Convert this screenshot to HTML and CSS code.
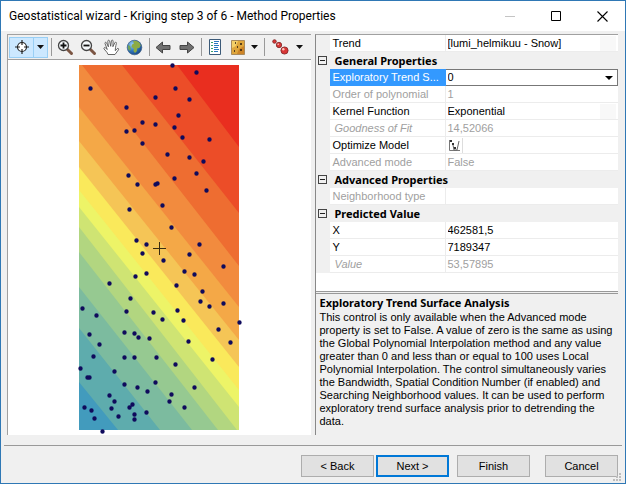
FILE: index.html
```
<!DOCTYPE html>
<html lang="en">
<head>
    <meta charset="UTF-8">
    <meta name="viewport" content="width=device-width, initial-scale=1.0">
    <title>Geostatistical wizard</title>
    <link rel="stylesheet" href="styles.css">
</head>
<body>
    <div class="window">
        <header class="titlebar">
            <h1>Geostatistical wizard - Kriging step 3 of 6 - Method Properties</h1>
            <div class="window-buttons">
                <button aria-label="Minimize" disabled><svg width="11" height="11"><path d="M0 5.5h10" stroke="#c4c4c4"/></svg></button>
                <button aria-label="Maximize"><svg width="11" height="11"><path d="M.5.5h9v9h-9z" fill="none" stroke="#000"/></svg></button>
                <button aria-label="Close"><svg width="11" height="11"><path d="M.5.5l10 10M10.5.5l-10 10" stroke="#000" stroke-width="1.1"/></svg></button>
            </div>
        </header>

        <main class="content">
            <section class="preview">
                <div class="toolbar">
                    <div class="split active">
                        <button aria-label="Identify">
                            <svg width="16" height="16"><circle cx="8" cy="8" r="4.5" fill="#fff" stroke="#222" stroke-width="1.2"/><path d="M8 1v5M8 10v5M1 8h5M10 8h5" stroke="#222" stroke-width="1.2"/></svg>
                        </button>
                        <button class="drop" aria-label="Identify options"><svg width="7" height="4"><path d="M0 0h7L3.500 4z" fill="#111"/></svg></button>
                    </div>
                    <span class="sep"></span>
                    <button class="tool" aria-label="Zoom in">
                        <svg width="17" height="17"><path d="M10.500 10.500l4 4" stroke="#7b5543" stroke-width="3" stroke-linecap="round"/><circle cx="6.500" cy="6.500" r="5" fill="#f6f9fb" stroke="#444" stroke-width="1.300"/><path d="M3.500 6.500h6M6.500 3.500v6" stroke="#111" stroke-width="1.800"/></svg>
                    </button>
                    <button class="tool" aria-label="Zoom out">
                        <svg width="17" height="17"><path d="M10.500 10.500l4 4" stroke="#7b5543" stroke-width="3" stroke-linecap="round"/><circle cx="6.500" cy="6.500" r="5" fill="#f6f9fb" stroke="#444" stroke-width="1.300"/><path d="M3.500 6.500h6" stroke="#111" stroke-width="1.800"/></svg>
                    </button>
                    <button class="tool" aria-label="Pan">
                        <svg width="17" height="17"><path d="M5 15.500C4 12.500 2 11.500 1 9.800c-.5-1.200.8-1.600 1.600-.8l1.700 1.500L2 4.500c-.4-1.300 1.100-1.700 1.600-.5l1.800 3.800L4.800 2.300c-.1-1.300 1.500-1.500 1.800-.2l1.100 5.200L8.400 2c.2-1.300 1.700-1.100 1.700.1l-.2 5.600 1.900-3.900c.6-1.200 1.900-.6 1.600.6-.8 3-1.100 5-1.100 7.300L14 9.800c1-1 2.200 0 1.400 1.100L12 15.500z" fill="#fff" stroke="#555" stroke-width=".9"/></svg>
                    </button>
                    <button class="tool" aria-label="Full extent">
                        <svg width="17" height="17">
                            <defs><radialGradient id="sea" cx=".35" cy=".3" r=".8"><stop offset="0" stop-color="#9fd0f5"/><stop offset=".5" stop-color="#3479c0"/><stop offset="1" stop-color="#123f7c"/></radialGradient></defs>
                            <circle cx="8.500" cy="8.500" r="7.300" fill="url(#sea)"/>
                            <path d="M7 2l3-.6 3.500 2 1.300 3-1.500 2.500-2 .3-.5 3L9 14l-1.500-2 .3-2.500L5.500 8 6 5.500 8 4.500z" fill="#8cab45"/>
                            <path d="M2 6l2 1 1 3-1 2-2-2z" fill="#6fa35a"/>
                            <circle cx="8.500" cy="8.500" r="7.300" fill="none" stroke="#3a5a80" stroke-width=".7"/>
                        </svg>
                    </button>
                    <span class="sep"></span>
                    <button class="tool" aria-label="Previous extent">
                        <svg width="17" height="15"><path d="M1 7.500L7.500 2v3.500H15v4H7.500V13z" fill="#707070" stroke="#444"/></svg>
                    </button>
                    <button class="tool" aria-label="Next extent">
                        <svg width="17" height="15"><path d="M16 7.500L9.500 2v3.500H2v4h7.500V13z" fill="#707070" stroke="#444"/></svg>
                    </button>
                    <span class="sep"></span>
                    <button class="tool" aria-label="Show legend">
                        <svg width="13" height="16"><path d="M.5.5h11v15H.5z" fill="#fff" stroke="#3c5a78"/><path d="M2 3.500h2M2 6.500h2M2 9.500h2M2 12.500h2" stroke="#3aa06a"/><path d="M5 2.500h5M5 4.500h4M5 6.500h5M5 8.500h4M5 10.500h5M5 12.500h4" stroke="#2a7ac0"/></svg>
                    </button>
                    <div class="split">
                        <button aria-label="Show layers">
                            <svg width="15" height="15"><path d="M.5.5h13v14H.5z" fill="#dfa63c" stroke="#a98a5c"/><path d="M1 1h6L5 6 1 8z" fill="#f4cf68"/><path d="M8 9l5-3v8H6z" fill="#cd8427"/><path d="M4 3h1M9 4h2M6 7h1M3 11h1M9 10h2" stroke="#2a1c10" stroke-width="1.500"/></svg>
                        </button>
                        <button class="drop" aria-label="Layer options"><svg width="7" height="4"><path d="M0 0h7L3.500 4z" fill="#111"/></svg></button>
                    </div>
                    <span class="sep"></span>
                    <div class="split points">
                        <button aria-label="Show points">
                            <svg width="17" height="16"><g fill="#d93636" stroke="#7c2525" stroke-width=".8"><circle cx="2.500" cy="2.500" r="1.800"/><circle cx="7" cy="6" r="2.700"/><circle cx="12.500" cy="11.500" r="3.600"/></g><g fill="#ffc4bc"><circle cx="6.200" cy="5.300" r=".8"/><circle cx="11.300" cy="10.300" r="1.200"/></g></svg>
                        </button>
                        <button class="drop" aria-label="Point options"><svg width="7" height="4"><path d="M0 0h7L3.500 4z" fill="#111"/></svg></button>
                    </div>
                </div>
                <div class="map">
                    <svg width="160" height="365" viewBox="0 0 160 365" role="img" aria-label="Predicted surface with sample points">
                        <path d="M0 0h160v365H0z" fill="#e92e1f"/>
                        <path d="M0 0h78l82 107v258H0z" fill="#e92e1f"/>
                        <path d="M0 0h98l62 82v283H0z" fill="#ec4d28"/>
                        <path d="M0 0h43l117 148v217H0z" fill="#ee6d31"/>
                        <path d="M0 0h3l157 201v164H0z" fill="#f28b3e"/>
                        <path d="M0 42l160 200v123H0z" fill="#f4a847"/>
                        <path d="M0 76l160 199v90H0z" fill="#f5c556"/>
                        <path d="M0 102l160 200v63H0z" fill="#fae95b"/>
                        <path d="M0 125l160 200v40H0z" fill="#edf467"/>
                        <path d="M0 142l160 200v23H0z" fill="#cfe473"/>
                        <path d="M0 162l158 203H0z" fill="#b2d680"/>
                        <path d="M0 187l139 178H0z" fill="#96c991"/>
                        <path d="M0 222l113 143H0z" fill="#7cbb9f"/>
                        <path d="M0 263l81 102H0z" fill="#5eacad"/>
                        <path d="M0 317l39 48H0z" fill="#429bbd"/>
                        <path class="samples" transform="translate(.5 .5)" d="M93 0h0M117 7h0M11 23h0M96 23h0M76 32h0M110 34h0M47 42h0M99 50h0M63 57h0M76 59h0M95 62h0M47 66h0M55 65h0M103 72h0M130 74h0M63 78h0M88 89h0M110 92h0M124 96h0M49 110h0M117 108h0M58 119h0M76 119h0M78 118h0M95 113h0M127 125h0
                            M83 140h0M50 144h0M92 162h0M57 175h0M67 179h0M120 179h0M63 188h0M110 189h0M84 195h0M144 201h0M105 206h0M115 209h0M67 208h0M56 211h0M30 218h0M97 220h0M123 226h0M51 233h0M121 236h0M144 238h0M130 241h0M3 243h0M47 246h0M74 247h0M98 245h0
                            M17 250h0M83 254h0M104 255h0M160 257h0M139 264h0M10 269h0M45 267h0M55 268h0M59 272h0M70 273h0M109 276h0M151 277h0M20 279h0M14 291h0M45 292h0M55 292h0M77 292h0M133 294h0M96 299h0M1 303h0M35 306h0M8 312h0M10 312h0M76 317h0M45 319h0M58 322h0M68 326h0M115 322h0M92 329h0M30 330h0
                            M35 336h0M90 336h0M5 342h0M12 345h0M32 343h0M50 342h0M53 339h0M105 342h0M67 347h0M39 351h0M55 349h0M55 354h0M15 353h0M23 366h0"/>
                        <path d="M74 183.500h13M80.500 177v13" stroke="#3a2c10"/>
                    </svg>
                </div>
            </section>

            <section class="properties">
                <div class="grid">
                    <table>
                        <colgroup><col class="col-gutter"><col class="col-name"><col></colgroup>
                        <tr>
                            <td></td>
                            <th><label for="trend">Trend</label></th>
                            <td><select id="trend" class="faint"><option>[lumi_helmikuu - Snow]</option></select></td>
                        </tr>
                        <tr class="group"><td><button aria-label="Collapse General Properties"></button></td><th colspan="2">General Properties</th></tr>
                        <tr class="selected">
                            <td></td>
                            <th><label for="explore">Exploratory Trend S...</label></th>
                            <td><select id="explore"><option>0</option></select></td>
                        </tr>
                        <tr class="off"><td></td><th>Order of polynomial</th><td>1</td></tr>
                        <tr>
                            <td></td>
                            <th><label for="kernel">Kernel Function</label></th>
                            <td><select id="kernel" class="faint"><option>Exponential</option></select></td>
                        </tr>
                        <tr class="off result"><td></td><th>Goodness of Fit</th><td>14,52066</td></tr>
                        <tr>
                            <td></td>
                            <th>Optimize Model</th>
                            <td><button class="optimize" aria-label="Optimize Model"><svg width="13" height="13"><path d="M1.500 1v10.500H12" fill="none" stroke="#777"/><path d="M5 6l1 5h3l2-9" fill="none" stroke="#666"/><path d="M2 1h2v2H2zM4 4h2v2H4zM6 8h2v2H6z" fill="#333"/></svg></button></td>
                        </tr>
                        <tr class="off"><td></td><th>Advanced mode</th><td>False</td></tr>
                        <tr class="group"><td><button aria-label="Collapse Advanced Properties"></button></td><th colspan="2">Advanced Properties</th></tr>
                        <tr class="off"><td></td><th>Neighborhood type</th><td></td></tr>
                        <tr class="group"><td><button aria-label="Collapse Predicted Value"></button></td><th colspan="2">Predicted Value</th></tr>
                        <tr><td></td><th><label for="x">X</label></th><td><input id="x" type="text" value="462581,5"></td></tr>
                        <tr><td></td><th><label for="y">Y</label></th><td><input id="y" type="text" value="7189347"></td></tr>
                        <tr class="off result"><td></td><th>Value</th><td>53,57895</td></tr>
                    </table>
                </div>
                <div class="help">
                    <h2>Exploratory Trend Surface Analysis</h2>
                    <p>This control is only available when the Advanced mode property is set to False. A value of zero is the same as using the Global Polynomial Interpolation method and any value greater than 0 and less than or equal to 100 uses Local Polynomial Interpolation. The control simultaneously varies the Bandwidth, Spatial Condition Number (if enabled) and Searching Neighborhood values. It can be used to perform exploratory trend surface analysis prior to detrending the data.</p>
                </div>
            </section>
        </main>

        <footer>
            <button>&lt; Back</button>
            <button class="default">Next &gt;</button>
            <button class="finish">Finish</button>
            <button class="cancel">Cancel</button>
            <svg class="grip" width="9" height="9"><path d="M6 0h2v2H6zM3 3h2v2H3zM6 3h2v2H6zM0 6h2v2H0zM3 6h2v2H3zM6 6h2v2H6z" fill="#bdbdbd"/></svg>
        </footer>
    </div>
</body>
</html>
```
FILE: styles.css
```
* {
    box-sizing: border-box;
}
body {
    margin: 0;
    font-family: "Liberation Sans", Arial, sans-serif;
    font-size: 11px;
    color: #000;
}
button, select, input {
    font: inherit;
    color: inherit;
    padding: 0;
    margin: 0;
    border: none;
    background: none;
}
svg {
    display: block;
}
.window {
    display: flex;
    flex-direction: column;
    min-height: 100vh;
    background: #f0f0f0;
    border: 1px solid #2f78b5;
}

/* title bar */
.titlebar {
    display: flex;
    justify-content: space-between;
    height: 30px;
    background: #fff;
}
.titlebar h1 {
    margin: 0;
    padding-left: 8px;
    font-family: Roboto, sans-serif;
    font-size: 12px;
    font-weight: normal;
    line-height: 30px;
    white-space: nowrap;
}
.window-buttons {
    display: flex;
}
.window-buttons button {
    display: flex;
    align-items: center;
    justify-content: center;
    width: 46px;
}

.content {
    display: flex;
    flex: 1;
    gap: 4px;
    padding: 3px 7px 10px 6px;
}

/* map preview */
.preview {
    display: flex;
    flex-direction: column;
    flex: 1;
    border-left: 1px solid #a0a0a0;
    border-top: 1px solid #a0a0a0;
}
.toolbar {
    display: flex;
    align-items: center;
    height: 25px;
    padding-left: 1px;
    border-bottom: 1px solid #a0a0a0;
}
.tool {
    display: flex;
    align-items: center;
    justify-content: center;
    width: 23px;
    height: 22px;
}
.sep {
    width: 1px;
    height: 18px;
    margin: 0 2px 0 3px;
    background: #999;
}
.split {
    display: flex;
    height: 21px;
}
.split button {
    display: flex;
    align-items: center;
    justify-content: center;
    width: 23px;
}
.split .drop {
    width: 14px;
}
.split:not(.active) .drop {
    margin-left: -3px;
}
.split.active {
    background: #cce8ff;
    border: 1px solid #99cff5;
}
.split.active .drop {
    border-left: 1px solid #99cff5;
}
.split.points {
    padding-left: 2px;
}
.split.points .drop {
    margin-left: 0;
}
.map {
    display: flex;
    justify-content: center;
    flex: 1;
    padding-top: 5px;
    background: #fff;
}
.map svg {
    overflow: visible;
}
.samples {
    stroke: #0f0a5c;
    stroke-width: 4.4;
    stroke-linecap: round;
}

/* property grid */
.properties {
    display: flex;
    flex-direction: column;
    flex: 1;
    border-left: 1px solid #888;
    border-top: 1px solid #a0a0a0;
}
.grid {
    padding-bottom: 18px;
    background: #fff;
    border-bottom: 1px solid #999;
}
table {
    width: 100%;
    table-layout: fixed;
    border-collapse: separate;
    border-spacing: 0;
}
.col-gutter {
    width: 14px;
}
.col-name {
    width: 116px;
}
tr {
    height: 17px;
}
th, td {
    height: 17px;
    padding: 1px 2px 0;
    font-weight: normal;
    line-height: 15px;
    text-align: left;
    white-space: nowrap;
    border-bottom: 1px solid #ececec;
}
th {
    padding-left: 3px;
    overflow: hidden;
    text-overflow: ellipsis;
    border-right: 1px solid #ececec;
}
td:first-child {
    padding: 0;
    background: #f0f0f0;
    border-bottom: none;
}
select, input {
    display: block;
    width: 100%;
    height: 15px;
    line-height: 15px;
    appearance: none;
}
select {
    background: url("data:image/svg+xml,%3Csvg xmlns='http://www.w3.org/2000/svg' width='8' height='4'%3E%3Cpath d='M0 0h8L4 4z'/%3E%3C/svg%3E") no-repeat right 2px center;
}
select.faint {
    background: linear-gradient(#f8f8f8, #f8f8f8) no-repeat right / 16px 100%;
}
.group th, .group td {
    background: #f0f0f0;
    border-color: #f0f0f0;
}
.group th, .help h2 {
    font-family: "Noto Sans", sans-serif;
    font-weight: bold;
}
.group th {
    padding-left: 5px;
}
.group button {
    display: block;
    width: 9px;
    height: 9px;
    margin-left: 2px;
    border: 1px solid #444;
    background: linear-gradient(#222, #222) no-repeat center / 5px 1px;
}
.selected th {
    color: #fff;
    background: #3399ff;
    border-color: #3399ff;
}
.selected td:last-child {
    padding-top: 0;
    border-top: 1px solid #777;
    border-bottom: 1px solid #777;
    border-right: 1px solid #777;
}
.off th, .off td {
    color: #a0a0a0;
}
.result th {
    padding-left: 5px;
    font-style: italic;
}
.optimize {
    display: block;
    width: 15px;
    height: 15px;
    border-right: 1px solid #ddd;
}

/* description under the grid */
.help {
    flex: 1;
    margin-top: 1px;
    padding: 1px 4px 0;
    border-top: 1px solid #999;
}
.help h2 {
    margin: 0;
    font-size: 11px;
    line-height: 16px;
}
.help p {
    margin: 0;
    line-height: 13px;
}

/* wizard buttons */
footer {
    position: relative;
    display: flex;
    justify-content: flex-end;
    gap: 2px;
    margin: 0 3px;
    padding: 9px 4px 6px;
    border-top: 1px solid #999;
}
footer button {
    width: 73px;
    height: 22px;
    background: #e1e1e1;
    border: 1px solid #adadad;
}
footer .default {
    border: 2px solid #0078d7;
}
footer .finish {
    margin-left: 6px;
}
footer .cancel {
    margin-left: 13px;
}
.grip {
    position: absolute;
    right: 0;
    bottom: 1px;
}
```
